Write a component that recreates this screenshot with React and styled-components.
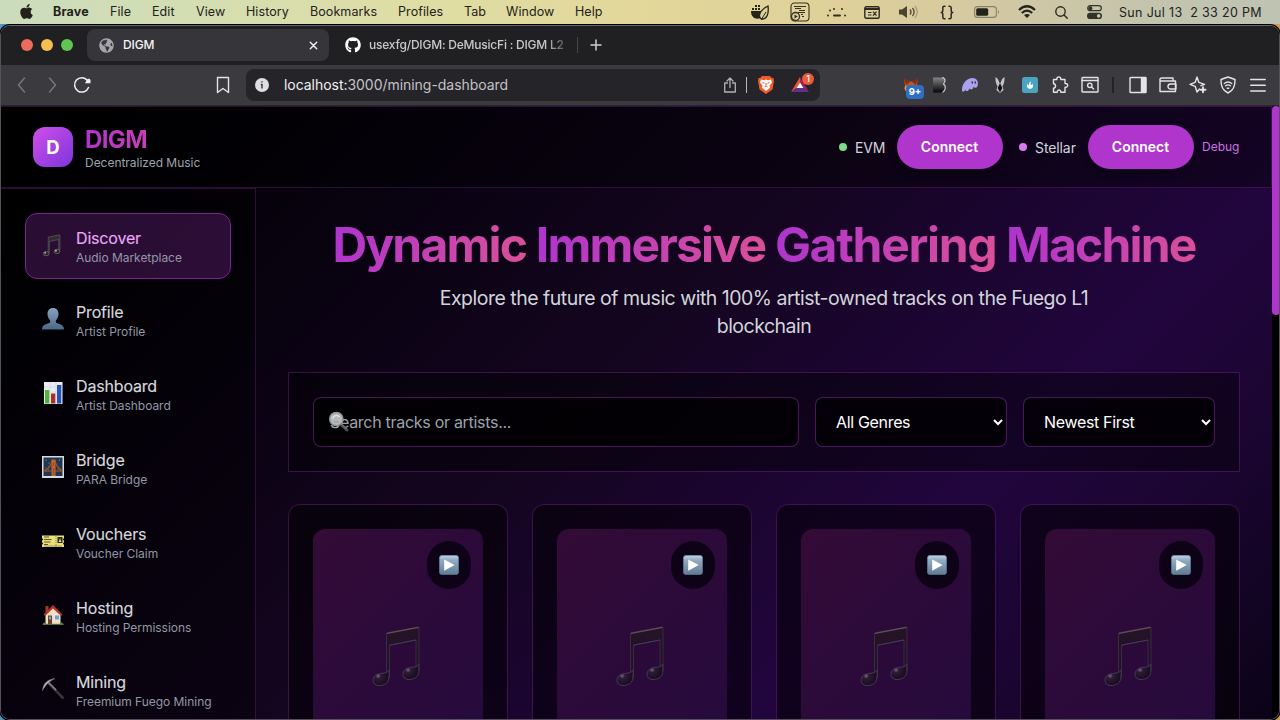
import React from "react";
import styled, { createGlobalStyle, css } from "styled-components";
import { FaApple, FaGithub, FaGlobeAmericas } from "react-icons/fa";

const GlobalStyle = createGlobalStyle`
  *, *::before, *::after { box-sizing: border-box; }
  html, body { margin: 0; padding: 0; overflow: hidden; background: #000; }
  body, input, select, button { font-family: Inter, "Liberation Sans", sans-serif; }
  svg { display: block; flex: none; }
`;

/* ---------- desktop ---------- */

const Desktop = styled.div`
  width: 1280px;
  height: 720px;
  display: flex;
  flex-direction: column;
  overflow: hidden;
  background: linear-gradient(90deg, #4f97c4 0%, #2f5d86 2%, #b98a4c 98%, #d79a50 100%);
`;

const MenuBar = styled.div`
  height: 24px;
  flex: none;
  display: flex;
  align-items: center;
  color: #22221a;
  background: linear-gradient(90deg, #cbdcbc 0%, #d6deb0 18%, #dfdda3 34%, #e3d79a 50%, #dfd09a 66%, #d2c8a2 78%, #c2c4ae 90%, #bfc3b2 100%);
`;

const AppleSlot = styled.div`
  width: 53px;
  padding: 0 0 1px 18px;
`;

const MenuItem = styled.span`
  width: ${(p) => p.$w}px;
  flex: none;
  font-size: 12.5px;
  line-height: 24px;
  font-weight: ${(p) => (p.$bold ? 700 : 400)};
  letter-spacing: ${(p) => (p.$bold ? 0.2 : 0.08)}px;
  white-space: nowrap;
`;

const StatusArea = styled.div`
  margin-left: auto;
  display: flex;
  align-items: center;
  height: 24px;
`;

const Slot = styled.div`
  width: ${(p) => p.$w}px;
  flex: none;
  display: flex;
  align-items: center;
`;

const Clock = styled.span`
  width: 161px;
  font-size: 12.5px;
  font-weight: 400;
  letter-spacing: 0.33px;
  white-space: pre;
`;

const WindowFrame = styled.div`
  flex: 1;
  min-height: 0;
  display: flex;
  flex-direction: column;
  overflow: hidden;
  border-radius: 10px;
  border: 1px solid #55505c;
  border-top-color: #66666a;
  box-shadow: 0 0 0 1px #000;
  margin-top: 1px;
  background: #000;
`;

/* ---------- tab strip ---------- */

const TabStrip = styled.div`
  height: 39px;
  flex: none;
  padding-bottom: 1px;
  display: flex;
  align-items: center;
  background: #202022;
`;

const Lights = styled.div`
  width: 86px;
  padding-left: 20px;
  display: flex;
  gap: 8px;
`;

const Light = styled.i`
  width: 12px;
  height: 12px;
  border-radius: 50%;
  background: ${(p) => p.$c};
`;

const Tab = styled.div`
  width: 242px;
  height: 32px;
  padding: 0 11px 0 12px;
  border-radius: 8px;
  display: flex;
  align-items: center;
  gap: 9px;
  color: ${(p) => (p.$active ? "#f4f4f6" : "#c9c9cc")};
  background: ${(p) => (p.$active ? "#36353a" : "transparent")};
  ${(p) => !p.$active && css`
    width: 248px;
    padding: 0 8px 0 16px;
    gap: 8px;
    border-radius: 0;
  `}
`;

const TabTitle = styled.span`
  flex: 1;
  overflow: hidden;
  white-space: nowrap;
  font-size: 12px;
  line-height: 16px;
  padding-bottom: 1px;
  font-weight: 500;
  letter-spacing: ${(p) => (p.$fade ? -0.22 : -0.1)}px;
  ${(p) => p.$fade && css`
    mask-image: linear-gradient(90deg, #000 88%, rgba(0, 0, 0, 0.2) 100%);
  `}
`;

const TabDivider = styled.i`
  width: 1px;
  height: 16px;
  margin-right: 12px;
  background: #47474a;
`;

/* ---------- toolbar ---------- */

const Toolbar = styled.div`
  height: 41px;
  flex: none;
  padding-bottom: 1px;
  display: flex;
  align-items: center;
  background: #3b3a3f;
  border-bottom: 1px solid #29272d;
`;

const NavButtons = styled.div`
  width: 245px;
  padding-left: 14px;
  display: flex;
  align-items: center;
`;

const AddressBar = styled.div`
  width: 574px;
  height: 32px;
  padding: 0 5px 0 8px;
  border-radius: 8px;
  display: flex;
  align-items: center;
  background: #252428;
`;

const Address = styled.span`
  flex: 1;
  padding: 0 0 1px 14px;
  font-size: 14px;
  letter-spacing: -0.04px;
  color: #c3c2c7;
  b { font-weight: 400; color: #f1f1f3; }
`;

const AddressDivider = styled.i`
  width: 1px;
  height: 16px;
  margin: 0 10px 0 9px;
  background: #b9b8bd;
`;

const RewardsButton = styled.div`
  position: relative;
  width: 24px;
  height: 20px;
  margin-left: 16px;
`;

const CountBadge = styled.span`
  position: absolute;
  top: -2px;
  right: 1px;
  width: 12px;
  height: 12px;
  border-radius: 50%;
  font-size: 9px;
  line-height: 12px;
  font-weight: 500;
  text-align: center;
  color: #fff;
  background: #ec5b3a;
`;

const FoxButton = styled.div`
  position: relative;
  width: 29px;
  height: 18px;
`;

const FoxBadge = styled.span`
  position: absolute;
  left: 4px;
  top: 9px;
  width: 18px;
  height: 14px;
  border-radius: 4px;
  font-size: 9.5px;
  line-height: 14px;
  font-weight: 700;
  text-align: center;
  color: #fff;
  background: #2f6fc2;
`;

const ToolbarExtensions = styled.div`
  margin-left: auto;
  display: flex;
  align-items: center;
`;

const ToolbarDivider = styled.i`
  width: 2px;
  height: 16px;
  margin: 0 15px 0 13px;
  background: #232226;
`;

/* ---------- page ---------- */

const Viewport = styled.div`
  flex: 1;
  min-height: 0;
  display: flex;
`;

const Page = styled.div`
  width: 1271px;
  height: 613px;
  flex: none;
  display: flex;
  flex-direction: column;
  overflow: hidden;
  color: #fff;
  background: linear-gradient(135deg, #000 0%, #030107 14%, #0b0314 30%, #14051f 46%, #1a052e 58%, #21053d 72%, #1b0531 84%, #140426 91%, #0b0317 100%);
`;

const ScrollTrack = styled.div`
  flex: 1;
  background: #000;
`;

const ScrollThumb = styled.div`
  width: 8px;
  height: 209px;
  border-radius: 4px;
  background: #b035cc;
`;

const Header = styled.header`
  height: 82px;
  flex: none;
  padding: 0 32px;
  display: flex;
  align-items: center;
  justify-content: space-between;
  background: rgba(0, 0, 0, 0.4);
  border: 1px solid rgba(176, 53, 204, 0.25);
  border-left: 0;
`;

const Brand = styled.div`
  display: flex;
  align-items: center;
  gap: 12px;
`;

const BrandMark = styled.div`
  width: 40px;
  height: 40px;
  border-radius: 12px;
  display: grid;
  place-items: center;
  font-size: 18.5px;
  font-weight: 700;
  background: linear-gradient(135deg, #d04fe8 0%, #7d35dd 100%);
`;

const BrandText = styled.div`
  padding-top: 1px;
`;

const BrandName = styled.div`
  font-size: 24px;
  line-height: 30px;
  font-weight: 700;
  letter-spacing: -0.6px;
  color: transparent;
  background: linear-gradient(90deg, #b035cc 0%, #c63fb3 54%, #db5097 100%);
  background-clip: text;
`;

const BrandTag = styled.div`
  font-size: 12px;
  line-height: 16px;
  letter-spacing: -0.03px;
  color: #9ca3af;
`;

const Wallets = styled.div`
  display: flex;
  align-items: center;
`;

const WalletLabel = styled.span`
  width: ${(p) => p.$w}px;
  display: flex;
  align-items: center;
  gap: 8px;
  font-size: 14px;
  letter-spacing: -0.1px;
  color: #d1d5db;
  &::before {
    content: "";
    width: 8px;
    height: 8px;
    border-radius: 50%;
    background: ${(p) => p.$dot};
  }
`;

const ConnectButton = styled.button`
  width: 106px;
  height: 44px;
  margin-right: ${(p) => p.$gap}px;
  padding: 0 1px 1px 0;
  border: 0;
  border-radius: 22px;
  font-size: 14px;
  font-weight: 600;
  letter-spacing: 0;
  color: #fff;
  background: #b035cc;
  box-shadow: 0 4px 8px rgba(0, 0, 0, 0.3);
`;

const DebugLink = styled.a`
  width: 37px;
  padding-bottom: 1px;
  font-size: 12px;
  color: #c873e0;
`;

const Body = styled.div`
  flex: 1;
  min-height: 0;
  display: flex;
`;

const Sidebar = styled.nav`
  width: 255px;
  flex: none;
  padding: 24px;
  display: flex;
  flex-direction: column;
  gap: 8px;
  overflow: hidden;
  background: rgba(0, 0, 0, 0.4);
  border: 1px solid rgba(176, 53, 204, 0.25);
  border-width: 1px 1px 0 0;
`;

const NavItem = styled.div`
  height: 66px;
  flex: none;
  padding: 0 16px;
  display: flex;
  align-items: center;
  gap: 12px;
  border-radius: 12px;
  border: 1px solid ${(p) => (p.$active ? "#7b2590" : "transparent")};
  background: ${(p) => (p.$active ? "rgba(176, 53, 204, 0.24)" : "transparent")};
  svg { margin-top: -2px; }
`;

const NavText = styled.div`
  display: flex;
  flex-direction: column;
`;

const NavLabel = styled.span`
  font-size: 16px;
  line-height: 22px;
  letter-spacing: -0.17px;
  color: ${(p) => (p.$active ? "#e9a8f7" : "#d6d9de")};
  -webkit-text-stroke: 0.15px currentColor;
`;

const NavSub = styled.span`
  margin: 1px 0 -1px;
  font-size: 12px;
  line-height: 16px;
  letter-spacing: -0.04px;
  white-space: nowrap;
  color: #9298a5;
`;

const Main = styled.main`
  flex: 1;
  min-width: 0;
  padding: 32px 32px 0;
  display: flex;
  flex-direction: column;
`;

const Hero = styled.section`
  height: 152px;
  flex: none;
  text-align: center;
`;

const HeroTitle = styled.h1`
  margin: -1px -20px 0;
  font-size: 48px;
  line-height: 52px;
  font-weight: 700;
  letter-spacing: -1.75px;
  white-space: nowrap;
`;

const GradientWord = styled.span`
  display: inline-block;
  padding: 0 2px 4px 0;
  margin-right: -2px;
  letter-spacing: ${(p) => p.$ls || -1.8}px;
  color: transparent;
  background: linear-gradient(100deg, #b035cc 5%, #db5097 100%);
  background-clip: text;
`;

const HeroText = styled.p`
  width: 672px;
  margin: 9px auto 0;
  font-size: 19.5px;
  line-height: 28px;
  letter-spacing: -0.5px;
  color: #d1d5db;
`;

const FilterBar = styled.section`
  height: 100px;
  flex: none;
  padding: 24px;
  display: flex;
  gap: 16px;
  background: rgba(0, 0, 0, 0.4);
  border: 1px solid rgba(176, 53, 204, 0.3);
`;

const field = css`
  height: 50px;
  border: 1px solid rgba(176, 53, 204, 0.42);
  border-radius: 8px;
  font-size: 16px;
  background: rgba(0, 0, 0, 0.75);
`;

const SearchBox = styled.div`
  position: relative;
  flex: 1;
`;

const SearchInput = styled.input`
  ${field}
  width: 100%;
  padding: 0 16px;
  letter-spacing: -0.29px;
  color: #fff;
  &::placeholder { color: #9ca3af; opacity: 1; }
`;

const SearchGlyph = styled.span`
  position: absolute;
  left: 15px;
  top: 14px;
`;

const Select = styled.select`
  ${field}
  width: 192px;
  padding: 0 0 0 16px;
  letter-spacing: -0.33px;
  color: #fff;
`;

const CardGrid = styled.section`
  padding-top: 32px;
  display: grid;
  grid-template-columns: repeat(4, 220px);
  gap: 24px;
`;

const Card = styled.article`
  height: 360px;
  padding: 24px;
  border-radius: 12px;
  border: 1px solid rgba(176, 53, 204, 0.3);
  background: rgba(0, 0, 0, 0.5);
`;

const Artwork = styled.div`
  position: relative;
  height: 256px;
  padding: 0 4px 2px 0;
  display: grid;
  justify-items: center;
  align-items: center;
  border-radius: 12px;
  background: linear-gradient(135deg, #340b36 0%, #2c0a39 40%, #250a3e 100%);
`;

const PlayButton = styled.button`
  position: absolute;
  top: 12px;
  right: 12px;
  width: 44px;
  height: 48px;
  padding: 0;
  border: 0;
  border-radius: 22px;
  display: grid;
  place-items: center;
  background: #0e0216;
`;

/* ---------- drawings ---------- */

const Stroke = ({ w = 18, h = w, box = "0 0 18 18", color = "#e4e3e8", sw = 1.4, children }) => (
  <svg width={w} height={h} viewBox={box} fill="none" stroke={color} strokeWidth={sw} strokeLinecap="round" strokeLinejoin="round">
    {children}
  </svg>
);

const MusicNote = ({ id }) => (
  <svg width="48" height="61" viewBox="0 0 48 61">
    <defs>
      <linearGradient id={id + "b"} x1="0" y1="0" x2="0" y2="1">
        <stop offset="0" stopColor="#251426" />
        <stop offset="1" stopColor="#21102a" />
      </linearGradient>
      <radialGradient id={id + "h"} cx="0.32" cy="0.38" r="0.7">
        <stop offset="0" stopColor="#7a6682" />
        <stop offset="0.25" stopColor="#2c1a35" />
        <stop offset="1" stopColor="#150b1c" />
      </radialGradient>
    </defs>
    <path d="M14.500 7 L47 .8 V45 H44 V14 L17.500 19.200 V52 H14.500Z" fill={`url(#${id}b)`} stroke="#3a2b42" strokeWidth="1" />
    <path d="M15 7.300 L46.500 1.300" stroke="#5f4f5c" strokeWidth="1.200" />
    <path d="M17.500 19.200 L44 14" stroke="#413a55" strokeWidth="1" />
    <path d="M17 44 C16 47 12 47 8.500 47.500 C3.500 48 1 51 1 54.500 C1 60.500 10 61 14.500 57 C17 54.500 17.300 52 17 44Z" fill={`url(#${id}h)`} stroke="#493851" strokeWidth="1" />
    <path d="M46.800 38 C46 41 42 41 38.500 41.500 C33.500 42 31 45 31 48.500 C31 54.500 40 55 44.500 51 C47 48.500 47 46 46.800 38Z" fill={`url(#${id}h)`} stroke="#493851" strokeWidth="1" />
  </svg>
);

const PlayEmoji = () => (
  <svg width="20" height="20" viewBox="0 0 20 20">
    <defs>
      <linearGradient id="playface" x1="0" y1="0" x2="0" y2="1">
        <stop offset="0" stopColor="#c3d5e6" />
        <stop offset="0.25" stopColor="#91abc4" />
        <stop offset="1" stopColor="#5f7a93" />
      </linearGradient>
    </defs>
    <rect x="0.3" y="0.3" width="19.4" height="19.4" rx="3" fill="url(#playface)" stroke="#5b7389" strokeWidth="0.6" />
    <path d="M5.2 4.4 L15.6 10 L5.2 15.8Z" fill="#fff" />
  </svg>
);

const navIcons = {
  discover: (
    <svg width="22" height="24" viewBox="0 0 22 24">
      <g transform="translate(1 1.5) scale(.36)">
        <path d="M14.5 7 L47 .8 V43 H43.7 V14 L17.5 19.5 V50 H14.5Z" fill="#332c33" stroke="#5c585c" strokeWidth="2" />
        <ellipse cx="9" cy="53" rx="8" ry="6" fill="#25222a" stroke="#77747a" strokeWidth="2" />
        <ellipse cx="39" cy="47" rx="8" ry="6" fill="#25222a" stroke="#77747a" strokeWidth="2" />
        <circle cx="6" cy="51" r="2.6" fill="#b7b4ba" /><circle cx="36" cy="45" r="2.6" fill="#b7b4ba" />
      </g>
    </svg>
  ),
  profile: (
    <svg width="22" height="24" viewBox="0 0 22 24">
      <defs><linearGradient id="bust" x1="0" y1="0" x2="0" y2="1"><stop offset="0" stopColor="#87a3c1" /><stop offset="1" stopColor="#4c6788" /></linearGradient></defs>
      <path d="M11 1c3.6 0 5.5 2.5 5.5 6 0 2.700-1.100 4.800-2.500 6.200-.3 1.600-.2 2.300.6 2.800 2.500 1 7.400 1.400 7.400 6.500H0c0-5.100 4.900-5.500 7.400-6.500.8-.5.9-1.200.6-2.800C6.600 11.800 5.500 9.700 5.500 7c0-3.500 1.900-6 5.500-6Z" fill="url(#bust)" />
    </svg>
  ),
  dashboard: (
    <svg width="22" height="24" viewBox="0 0 22 24">
      <rect x="2" y="1" width="18.500" height="22" fill="#e9edf3" />
      <path d="M2 6h18M2 11h18M2 16h18M8 1v22M14 1v22" stroke="#cdd5e0" strokeWidth=".6" />
      <rect x="3" y="9" width="4.300" height="13.500" fill="#4fb33a" /><rect x="9" y="12.500" width="4.300" height="10" fill="#b52a25" /><rect x="15" y="4" width="4.300" height="18.500" fill="#2454b8" />
    </svg>
  ),
  bridge: (
    <svg width="22" height="24" viewBox="0 0 22 24">
      <rect x="0" y="1" width="22" height="22" fill="#d4dce2" /><rect x="1.500" y="2.500" width="19" height="18.500" fill="#203750" />
      <path d="M1.500 16 Q8 14 10 6 M20.500 16 Q15 13 13 6 M1.500 16H20.500" stroke="#a0562f" strokeWidth="1.100" fill="none" />
      <path d="M4 12v5M6.500 11v6M16 11v6M18.500 13v4" stroke="#8a4e35" strokeWidth=".8" />
      <path d="M9.500 4.500h4V21h-4Z" fill="#c8642a" /><path d="M10.800 7h1.500v4h-1.500zM10.800 13h1.500v7h-1.500z" fill="#a04c26" />
      <circle cx="4" cy="5" r=".6" fill="#b7b27a" /><circle cx="7" cy="8" r=".5" fill="#b7b27a" /><circle cx="17.500" cy="5" r=".6" fill="#b7b27a" />
    </svg>
  ),
  vouchers: (
    <svg width="22" height="24" viewBox="0 0 22 24">
      <path d="M0 6.500h22v3a1 1 0 0 0 0 2v2a1 1 0 0 0 0 2v2.500H0v-2.500a1 1 0 0 0 0-2v-2a1 1 0 0 0 0-2Z" fill="#e9e07a" />
      <path d="M2 8h5M2 10.500h7.500M2 13h6.500M2 15.500h4" stroke="#5d5930" strokeWidth="1" /><path d="M14 7v11" stroke="#5d5930" strokeWidth=".7" strokeDasharray="1 1" />
      <path d="M15.500 8h5v6h-5z" fill="#2b2a1c" /><path d="M2 17h18" stroke="#77713b" strokeWidth=".6" /><path d="M18 9l1.300 4h-2.600z" fill="#e9e07a" />
    </svg>
  ),
  hosting: (
    <svg width="22" height="24" viewBox="0 0 22 24">
      <rect x="3.500" y="3" width="3" height="6" fill="#a33a2c" /><path d="M3.500 11 L11 4 L18.500 11V21H3.500Z" fill="#f0dfc0" />
      <path d="M1.500 11.500 L11 2 L20.500 11.500 L19 13 L11 5.500 L3 13Z" fill="#b8332b" />
      <rect x="6" y="12.500" width="4" height="8.500" fill="#6d3e2c" /><rect x="7" y="13.500" width="2" height="3" fill="#76a7cf" /><rect x="12.500" y="12" width="5" height="5" fill="#6fa3cf" stroke="#fff" strokeWidth=".6" />
      <path d="M1 21.500c1-2.500 2.500-1.500 3.500 0M18 21.500c1-2.500 2.500-1.500 3 0M1 21.300H21.500" stroke="#5d8b38" strokeWidth="1" fill="#5d8b38" />
    </svg>
  ),
  mining: (
    <svg width="22" height="24" viewBox="0 0 22 24">
      <path d="M6 5.500 L21.500 21.500" stroke="#38363a" strokeWidth="2.600" /><path d="M6 5 L14 13" stroke="#85858a" strokeWidth="1.600" />
      <path d="M.5 13.500 C1 7 5 2.500 13 1.500 C8.500 3.500 4 7 .5 13.500Z" fill="#b8bcc0" stroke="#74787c" strokeWidth=".6" />
    </svg>
  ),
};

const nav = [
  ["discover", "Discover", "Audio Marketplace"],
  ["profile", "Profile", "Artist Profile"],
  ["dashboard", "Dashboard", "Artist Dashboard"],
  ["bridge", "Bridge", "PARA Bridge"],
  ["vouchers", "Vouchers", "Voucher Claim"],
  ["hosting", "Hosting", "Hosting Permissions"],
  ["mining", "Mining", "Freemium Fuego Mining"],
];

const menus = [
  ["Brave", 57], ["File", 42], ["Edit", 44], ["View", 50], ["History", 64],
  ["Bookmarks", 88], ["Profiles", 66], ["Tab", 42], ["Window", 69], ["Help", 40],
];

const MagnifierEmoji = () => (
  <svg width="22" height="22" viewBox="0 0 22 22">
    <path d="M12.500 13 L19 19" stroke="#4c4e52" strokeWidth="3" strokeLinecap="round" />
    <path d="M12.500 12 L18.500 18" stroke="#898c90" strokeWidth="1" />
    <circle cx="8.300" cy="8" r="6.700" fill="#b6b8bb" stroke="#8e9296" strokeWidth="1.300" />
    <path d="M4.500 7.500a4 4 0 0 1 7-1.500" stroke="#e3e5e7" strokeWidth="1.300" fill="none" />
    <path d="M6 10.500q2 1.500 4 0" stroke="#92969b" strokeWidth="1" fill="none" />
  </svg>
);

function StatusIcons() {
  return (
    <>
      <Slot $w={40}>
        <svg width="20" height="18" viewBox="0 0 20 18" fill="#26251c">
          <path d="M1 8h10v7c-5 2-10 0-10-7Z" /><path d="M2 5h2v2H2zM5 5h2v2H5zM8 5h2v2H8zM5 2h2v2H5zM8 2h2v2H8z" />
          <path d="M18 3c1 8-1 13-6 13-4-1-4-8 6-13Z" fill="#ddd096" stroke="#26251c" strokeWidth="1.300" /><path d="M11 17 L16 9" stroke="#26251c" />
        </svg>
      </Slot>
      <Slot $w={37}>
        <svg width="20" height="20" viewBox="0 0 20 20" fill="none" stroke="#33311f">
          <rect x="1" y="1" width="18" height="18" rx="3.500" strokeWidth="1.100" /><path d="M4 4.500h12M5 6.500h6M9 8.500h6M8 10.500h7M11 12.500h2M12 14.500h2" strokeWidth="1.200" />
          <circle cx="5.500" cy="14.500" r="4" fill="#ddd29c" strokeWidth="1.300" /><path d="M4.500 12.500l3.200 2-3.200 2z" fill="#33311f" stroke="none" />
        </svg>
      </Slot>
      <Slot $w={37}>
        <svg width="20" height="12" viewBox="0 0 20 12" fill="#33311f"><circle cx="3" cy="4.500" r="1" /><circle cx="7" cy="3" r="1" /><circle cx="15" cy="3" r="1" /><circle cx="1" cy="9.500" r="1" /><rect x="6" y="8.500" width="8" height="2" rx="1" /><circle cx="18" cy="9.500" r="1" /></svg>
      </Slot>
      <Slot $w={35}>
        <svg width="16" height="13" viewBox="0 0 16 13"><rect x=".8" y=".8" width="14.400" height="11.400" rx="1.500" fill="none" stroke="#2b2a20" strokeWidth="1.400" /><path d="M1 3h14" stroke="#2b2a20" strokeWidth="2" /><path d="M4 6.500h3.500M4 9h3.500M9 5.700l3.500 4M12.500 5.700l-3.500 4" stroke="#2b2a20" strokeWidth="1.200" /></svg>
      </Slot>
      <Slot $w={41}>
        <svg width="21" height="14" viewBox="0 0 21 14" fill="none"><path d="M0 4.500h3L8 1v12L3 9.500H0Z" fill="#47442f" /><path d="M11 4.500q2 2.500 0 5M13.500 2.800q3.200 4.200 0 8.400" stroke="#57543c" strokeWidth="1.400" /><path d="M16 1q4.500 6 0 12" stroke="#a9a27a" strokeWidth="1.300" /></svg>
      </Slot>
      <Slot $w={34}>
        <Stroke w={14} h={15} box="0 0 14 15" color="#2b2a20" sw={1.5}><path d="M5 1.200H4.300C3 1.200 2.800 2 2.800 3V5.500C2.800 6.700 2.200 7.500 1.200 7.500 2.200 7.500 2.800 8.300 2.800 9.500V12C2.800 13 3 13.800 4.300 13.800H5M9 1.200h.7C11 1.200 11.200 2 11.200 3V5.500C11.200 6.700 11.800 7.500 12.800 7.500 11.800 7.500 11.200 8.300 11.200 9.500V12C11.200 13 11 13.800 9.700 13.800H9" /></Stroke>
      </Slot>
      <Slot $w={44}>
        <svg width="26" height="12" viewBox="0 0 26 12"><rect x=".6" y=".6" width="21.800" height="10.800" rx="3" fill="none" stroke="#86826c" strokeWidth="1.100" /><rect x="2.200" y="2.200" width="12" height="7.600" rx="1.500" fill="#23221b" /><path d="M24 4q2 2 0 4" fill="#86826c" /></svg>
      </Slot>
      <Slot $w={37}>
        <svg width="18" height="14" viewBox="0 0 18 14" fill="none" stroke="#23221b" strokeWidth="2.200"><path d="M1 5q8-7.500 16 0M3.800 8q5.200-4.600 10.400 0" /><path d="M9 13l-3-3q3-2.200 6 0z" fill="#23221b" stroke="none" /></svg>
      </Slot>
      <Slot $w={32}>
        <Stroke w={13} box="0 0 13 13" color="#2b2a20" sw={1.4}><circle cx="5.500" cy="5.500" r="4.700" /><path d="M9 9l3.300 3.300" /></Stroke>
      </Slot>
      <Slot $w={32}>
        <svg width="15" height="14" viewBox="0 0 15 14"><rect x=".7" y=".7" width="13.600" height="5" rx="2.500" fill="none" stroke="#33322a" strokeWidth="1.200" /><circle cx="3.400" cy="3.200" r="2" fill="#33322a" /><rect x="0" y="7.800" width="15" height="6.200" rx="3.100" fill="#33322a" /><circle cx="11.700" cy="10.900" r="1.800" fill="#c7c6aa" /></svg>
      </Slot>
    </>
  );
}

function Extensions() {
  return (
    <ToolbarExtensions>
      <FoxButton>
        <svg width="18" height="18" viewBox="0 0 18 18"><path d="M2 3l5 2.500h4L16 3l-1 6 1 4-4 3H6l-4-3 1-4Z" fill="#c25420" /><path d="M1 1.500l7 4-3.500 3.500ZM17 1.500l-7 4 3.500 3.500Z" fill="#7d3018" /><path d="M3 10l4 .5 2 5-6-1Z" fill="#e89a52" /></svg>
        <FoxBadge>9+</FoxBadge>
      </FoxButton>
      <Slot $w={30}>
        <svg width="18" height="18" viewBox="0 0 18 18"><defs><linearGradient id="bk" x1="0" y1="0" x2="0" y2="1"><stop offset="0" stopColor="#848488" /><stop offset="1" stopColor="#050505" /></linearGradient></defs><path d="M2 1.500h9c4 0 4.500 5 1.500 6.500C16 10 14 16.500 10 16.500H2Z" fill="url(#bk)" /><path d="M11 1.500c4 .5 3.500 4 1.500 6.500 3 2 2 7-1 8.500" fill="none" stroke="#c5c5c8" strokeWidth="1.200" /></svg>
      </Slot>
      <Slot $w={33}>
        <svg width="18" height="16" viewBox="0 0 18 16"><path d="M1 13C1 6 6 1 11.500 1 16 1 18 5 16.500 9c-1 2.500-3 2-4 .8-.5 2.700-2.500 3.700-4 1.700C7 15 4.500 14.500 4.500 12.500 3.500 15 1 15.500 1 13Z" fill="#aba1ee" /><ellipse cx="11.300" cy="5.500" rx=".8" ry="1.300" fill="#3b3a3f" /><ellipse cx="14.300" cy="5.500" rx=".8" ry="1.300" fill="#3b3a3f" /></svg>
      </Slot>
      <Slot $w={28}>
        <svg width="12" height="18" viewBox="0 0 12 18"><path d="M1.500 1c2 1 3 3 4 6l1 0c1-3 2-5 4-6 .3 4-.5 7-2 9l1 4-3.500 3L2.500 14l1-4C2 8 1.200 5 1.500 1Z" fill="#c4c4c8" /><path d="M6 7l2.300 5L6 16.500 3.700 12Z" fill="#111" /></svg>
      </Slot>
      <Slot $w={29}>
        <svg width="16" height="16" viewBox="0 0 16 16"><rect width="16" height="16" rx="2.500" fill="#4aa3bf" /><path d="M5.500 6.500c-1.500 2.800 0 5.300 2.500 5.300 2.800 0 4-3 2.200-5.300 0 1.200-.8 1.500-1.200 1.500C8.200 7 8.600 5.300 9 4.200 7 5 6.800 7.500 7.200 8.700 6.200 8.300 5.700 7.500 5.500 6.500Z" fill="#fff" /></svg>
      </Slot>
      <Slot $w={30}>
        <Stroke><path d="M2.500 3.500h3.400C5.200 0 10.300 0 9.800 3.500H14v4c3.600-.6 3.600 4.300 0 3.800V16.300H9.800c.3-3-3.800-3-3.600 0H2.500v-4c2.700-.2 2.700-4.300 0-4.500Z" /></Stroke>
      </Slot>
      <Slot $w={18}>
        <Stroke><rect x="1" y="1.500" width="16" height="14.500" rx=".5" /><path d="M1 4.500h16M10.700 11.200l1.900 1.900" /><circle cx="8.800" cy="9.300" r="2.200" /></Stroke>
      </Slot>
      <ToolbarDivider />
      <Slot $w={30}>
        <Stroke><rect x="1" y="1.500" width="16" height="15" rx=".5" /><path d="M12.500 2v14h4V2z" fill="#e4e3e8" /></Stroke>
      </Slot>
      <Slot $w={30}>
        <Stroke><path d="M1 3v12.500h15.500V5H1M1 3.500C1 2 2 2 3 2h11v3M17 8h-5.500a2.500 2.500 0 0 0 0 5H17Z" /></Stroke>
      </Slot>
      <Slot $w={30}>
        <Stroke><path d="M10.500 13 L8 16 6.200 10.300 1 8.300 6.200 6.300 8 1 9.800 6.300 15.500 8.300 12 9.700" /><path d="M14 11.300v5M11.500 13.800h5" strokeWidth="1.900" /></Stroke>
      </Slot>
      <Slot $w={31}>
        <Stroke><path d="M9 1l7 2.500C16.300 10 14.500 14.500 9 17 3.500 14.500 1.700 10 2 3.500Z" /><path d="M5.300 7.500q3.700-3 7.400 0M6.700 9.800q2.300-1.800 4.600 0M8.300 12.200h1.400" /></Stroke>
      </Slot>
      <Slot $w={29}>
        <Stroke w={16} h={16} box="0 0 16 16" sw={1.6}><path d="M.8 2.500h14.400M.8 8.300h14.400M.8 14h14.400" /></Stroke>
      </Slot>
    </ToolbarExtensions>
  );
}

export default function App() {
  return (
    <Desktop>
      <GlobalStyle />
      <MenuBar>
        <AppleSlot><FaApple size={17} /></AppleSlot>
        {menus.map(([label, w], i) => (
          <MenuItem key={label} $w={w} $bold={i === 0}>{label}</MenuItem>
        ))}
        <StatusArea>
          <StatusIcons />
          <Clock>{"Sun Jul 13  2 33 20 PM"}</Clock>
        </StatusArea>
      </MenuBar>

      <WindowFrame>
        <TabStrip>
          <Lights><Light $c="#ed6a5e" /><Light $c="#f4bf4f" /><Light $c="#61c554" /></Lights>
          <Tab $active>
            <FaGlobeAmericas size={15} color="#a4a6ab" />
            <TabTitle>DIGM</TabTitle>
            <Stroke w={9} box="0 0 9 9" sw={1.5} color="#ededf0"><path d="M1.300 1.300l6.400 6.400M7.700 1.300l-6.400 6.400" /></Stroke>
          </Tab>
          <Tab>
            <FaGithub size={16} color="#fff" />
            <TabTitle $fade>usexfg/DIGM: DeMusicFi : DIGM L2</TabTitle>
          </Tab>
          <TabDivider />
          <Stroke w={12} box="0 0 12 12" sw={1.5} color="#cfcfd2"><path d="M6 1v10M1 6h10" /></Stroke>
        </TabStrip>

        <Toolbar>
          <NavButtons>
            <Slot $w={32}><Stroke w={12} h={16} box="0 0 12 16" color="#77767b" sw={1.5}><path d="M9.500 1L3.500 8l6 7" /></Stroke></Slot>
            <Slot $w={26}><Stroke w={12} h={16} box="0 0 12 16" color="#77767b" sw={1.5}><path d="M2.500 1l6 7-6 7" /></Stroke></Slot>
            <Slot $w={143}>
              <svg width="18" height="18" viewBox="0 0 18 18" fill="none"><path d="M15.500 11.500A7.200 7.200 0 1 1 14.500 4.500" stroke="#f1f1f3" strokeWidth="1.500" strokeLinecap="round" /><path d="M12 7.200h5.500V4.500a2 2 0 0 0-3.500-1Z" fill="#f1f1f3" /></svg>
            </Slot>
            <Stroke w={14} h={18} box="0 0 14 18"><path d="M1.500 1.500h11v15L7 12.500l-5.500 4Z" /></Stroke>
          </NavButtons>
          <AddressBar>
            <svg width="16" height="16" viewBox="0 0 16 16"><circle cx="8" cy="8" r="7" fill="#dfdee3" /><path d="M8 7v4.500M6.800 7.500H8M8 4.200v1.300" stroke="#29282c" strokeWidth="1.300" /></svg>
            <Address><b>localhost:</b>3000/mining-dashboard</Address>
            <Stroke w={14} h={16} box="0 0 14 16" color="#b3b2b7" sw={1.3}><path d="M4.500 6H1.700v9h10.600V6H9.500M7 10.500V1.200M4 4l3-3 3 3" /></Stroke>
            <AddressDivider />
            <svg width="18" height="20" viewBox="0 0 18 20"><path d="M5 1h8l1.500 1.700L16.500 3l.5 3-1.500 8.500L9 19l-6.500-4.500L1 6l.5-3 2-.3Z" fill="#ee5a28" /><path d="M4 4.500l3 .7 2-.7 2 .7 3-.7 1 3-2.500 3.300.5 2L9 16l-4-3.200.5-2L3 7.500Z" fill="#fff" /><path d="M5.500 7.300l2 1M12.500 7.300l-2 1M9 8v2.500M7.500 12L9 11l1.500 1" stroke="#ee5a28" strokeWidth="1" fill="none" /></svg>
            <RewardsButton>
              <svg width="18" height="17" viewBox="0 0 18 17"><g transform="translate(0 2)"><path d="M9 0v5.500L5.500 11 0 15Z" fill="#f0502b" /><path d="M9 0l9 15-5.500-4L9 5.500Z" fill="#9e1f63" /><path d="M0 15l5.500-4h7L18 15Z" fill="#662d91" /><path d="M9 5.500l3.500 5.500h-7Z" fill="#fff" /></g></svg>
              <CountBadge>1</CountBadge>
            </RewardsButton>
          </AddressBar>
          <Extensions />
        </Toolbar>

        <Viewport>
          <Page>
            <Header>
              <Brand>
                <BrandMark>D</BrandMark>
                <BrandText>
                  <BrandName>DIGM</BrandName>
                  <BrandTag>Decentralized Music</BrandTag>
                </BrandText>
              </Brand>
              <Wallets>
                <WalletLabel $w={58} $dot="#79dc87">EVM</WalletLabel>
                <ConnectButton $gap={16}>Connect</ConnectButton>
                <WalletLabel $w={69} $dot="#d97bf0">Stellar</WalletLabel>
                <ConnectButton $gap={8}>Connect</ConnectButton>
                <DebugLink>Debug</DebugLink>
              </Wallets>
            </Header>
            <Body>
              <Sidebar>
                {nav.map(([id, label, sub], i) => (
                  <NavItem key={id} $active={i === 0}>
                    {navIcons[id]}
                    <NavText>
                      <NavLabel $active={i === 0}>{label}</NavLabel>
                      <NavSub>{sub}</NavSub>
                    </NavText>
                  </NavItem>
                ))}
              </Sidebar>
              <Main>
                <Hero>
                  <HeroTitle>
                    <GradientWord>Dynamic</GradientWord> <GradientWord>Immersive</GradientWord>{" "}
                    <GradientWord $ls={-1.3}>Gathering</GradientWord> <GradientWord>Machine</GradientWord>
                  </HeroTitle>
                  <HeroText>Explore the future of music with 100% artist-owned tracks on the Fuego L1 blockchain</HeroText>
                </Hero>
                <FilterBar>
                  <SearchBox>
                    <SearchInput placeholder="Search tracks or artists..." />
                    <SearchGlyph><MagnifierEmoji /></SearchGlyph>
                  </SearchBox>
                  <Select><option>All Genres</option></Select>
                  <Select><option>Newest First</option></Select>
                </FilterBar>
                <CardGrid>
                  {[0, 1, 2, 3].map((n) => (
                    <Card key={n}>
                      <Artwork>
                        <MusicNote id={"note" + n} />
                        <PlayButton><PlayEmoji /></PlayButton>
                      </Artwork>
                    </Card>
                  ))}
                </CardGrid>
              </Main>
            </Body>
          </Page>
          <ScrollTrack><ScrollThumb /></ScrollTrack>
        </Viewport>
      </WindowFrame>
    </Desktop>
  );
}
